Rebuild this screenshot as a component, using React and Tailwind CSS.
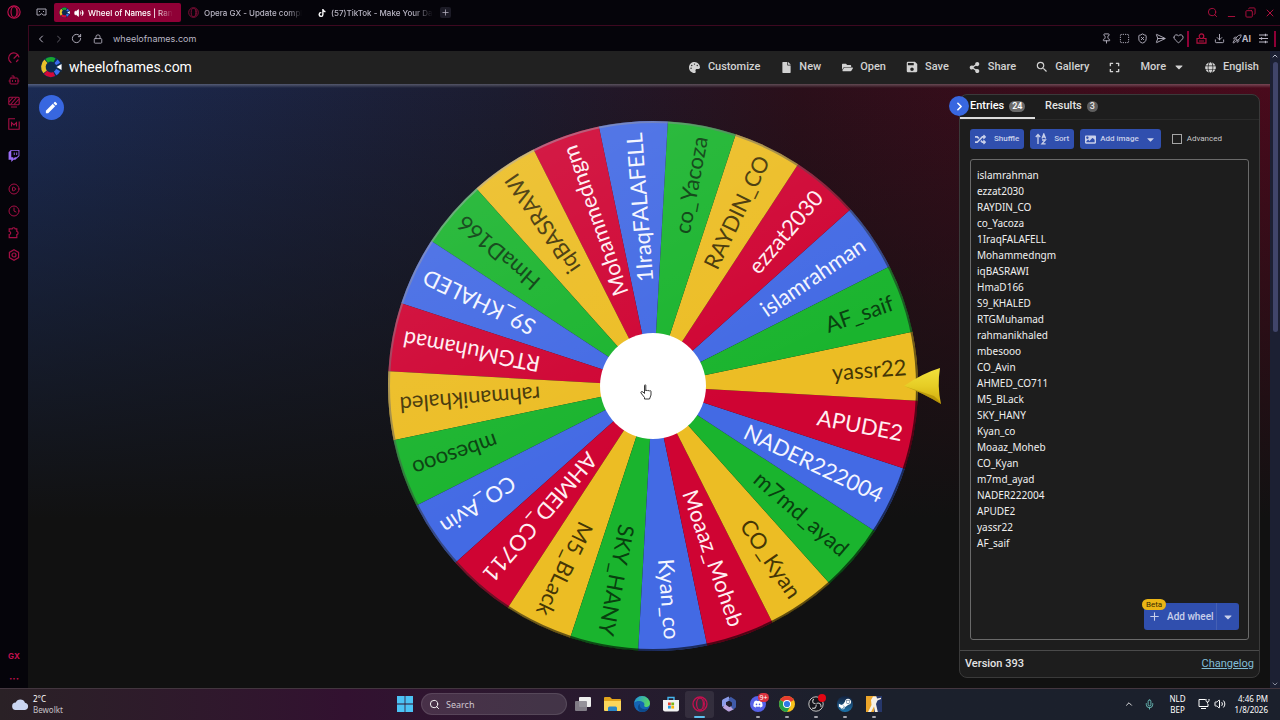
import React, { useState } from 'react';
import {
  Volume2, Plus, ChevronLeft, ChevronRight, ChevronUp, ChevronDown, RotateCw, Lock, Search, Minus, Copy, X,
  Pin, SquareDashed, ShieldX, SendHorizontal, Heart, Download, Rocket,
  Bot, CirclePlay, Clock, Mic,
} from 'lucide-react';
import {
  FaPalette, FaFile, FaFolderOpen, FaShareAlt, FaExpand, FaGlobe, FaRandom, FaImage, FaCaretDown,
  FaTwitch, FaTiktok, FaDiscord, FaSteamSymbol,
} from 'react-icons/fa';
import { MdSave, MdSearch, MdEdit } from 'react-icons/md';

const NAMES = [
  'islamrahman', 'ezzat2030', 'RAYDIN_CO', 'co_Yacoza', '1IraqFALAFELL', 'Mohammedngm',
  'iqBASRAWI', 'HmaD166', 'S9_KHALED', 'RTGMuhamad', 'rahmanikhaled', 'mbesooo',
  'CO_Avin', 'AHMED_CO711', 'M5_BLack', 'SKY_HANY', 'Kyan_co', 'Moaaz_Moheb',
  'CO_Kyan', 'm7md_ayad', 'NADER222004', 'APUDE2', 'yassr22', 'AF_saif',
];

const SLICE_COLORS = ['#436ae4', '#cf0433', '#ecbd24', '#1ab42e'];
const TEXT_COLORS = ['#f3f5ff', '#ffeef2', '#453606', '#08400f'];

const OperaLogo = ({ size, color = '#c4104f' }) => (
  <svg width={size} height={size} viewBox="0 0 16 16" fill="none" stroke={color}>
    <circle cx="8" cy="8" r="7" strokeWidth="1.3" />
    <ellipse cx="8" cy="8" rx="3.4" ry="6" strokeWidth="1.3" />
    <path d="M11 3.2c2.2 2.4 2.2 7.2 0 9.6" strokeWidth="1" />
  </svg>
);

const WheelLogo = ({ size }) => (
  <svg width={size} height={size} viewBox="0 0 24 24" fill="none">
    <circle cx="12" cy="12" r="11.5" fill="#0d2a4f" />
    <g strokeWidth="5">
      <path d="M6.500 5.800A8.300 8.300 0 0 0 5.600 17.300" stroke="#e9c02a" />
      <path d="M6 17.800A8.300 8.300 0 0 0 15.500 19.600" stroke="#d5083a" />
      <path d="M16.500 19A8.300 8.300 0 0 0 17.500 5.700" stroke="#3d6df0" />
      <path d="M15.800 4.600A8.300 8.300 0 0 0 7.200 5.200" stroke="#17a62f" />
    </g>
    <path d="M14 12l9.500-5.500v11z" fill="#0d2a4f" />
    <path d="M18 12l5.500-3.400v6.800z" fill="#fff" />
  </svg>
);

const TabStrip = () => (
  <div className="flex h-[25px] items-center pr-1 text-[8px] font-medium text-[#b9b6c4]">
    <button aria-label="Tab islands" className="ml-2 mr-[7px] flex w-[11px]">
      <svg width="11" height="9" viewBox="0 0 11 9" fill="none" stroke="#a9a6b4">
        <path d="M1 1h9v6H7.4L5.5 5.6 3.6 7H1z" />
        <path d="M3 3.5h1M7 3.5h1" />
      </svg>
    </button>
    <button className="flex h-[19px] w-[127px] items-center gap-1 rounded-[2px] bg-[#8f0036] px-[5px] text-white">
      <WheelLogo size={11} />
      <Volume2 size={10} fill="currentColor" />
      <span className="whitespace-nowrap [mask-image:linear-gradient(to_right,black_80%,transparent)]">Wheel of Names | Ran</span>
    </button>
    <button className="flex h-[19px] w-[128px] items-center gap-[5px] pl-[7px]">
      <OperaLogo size={11} color="#8d0f3c" />
      <span className="whitespace-nowrap [mask-image:linear-gradient(to_right,black_85%,transparent)]">Opera GX - Update compl</span>
    </button>
    <button className="flex h-[19px] w-[125px] items-center gap-[5px] pl-[9px]">
      <FaTiktok size={8} className="text-white" />
      <span className="whitespace-nowrap [mask-image:linear-gradient(to_right,black_80%,transparent)]">(57)TikTok - Make Your Da</span>
    </button>
    <button aria-label="New tab" className="ml-[6px] flex size-[11px] items-center justify-center rounded-[2px] bg-[#1c1b26]">
      <Plus size={9} />
    </button>
    <div className="ml-auto flex items-center gap-2 text-[#b3103f]">
      <button aria-label="Search tabs"><Search size={11} /></button>
      <button aria-label="Minimize" className="pt-2"><Minus size={11} /></button>
      <button aria-label="Restore"><Copy size={11} className="-scale-x-100" /></button>
      <button aria-label="Close"><X size={12} /></button>
    </div>
  </div>
);

const AddressBar = () => (
  <div className="flex h-[26px] items-center border-l border-t border-[#3d0820] pl-[6px] pr-1 text-[9px] text-[#b9b6c4]">
    <button aria-label="Back" className="mr-[6px]"><ChevronLeft size={12} /></button>
    <button aria-label="Forward" className="mr-[6px] opacity-50"><ChevronRight size={12} /></button>
    <button aria-label="Reload" className="mr-[11px]"><RotateCw size={11} /></button>
    <Lock size={10} className="mr-[10px]" />
    <span>wheelofnames.com</span>
    <div className="ml-auto flex items-center gap-[7px]">
      <button aria-label="Pin"><Pin size={11} /></button>
      <button aria-label="Snapshot"><SquareDashed size={11} /></button>
      <button aria-label="Ad blocker"><ShieldX size={11} /></button>
      <button aria-label="Send"><SendHorizontal size={11} /></button>
      <button aria-label="Favourite"><Heart size={11} /></button>
      <span className="-mx-1 h-4 w-[2px] bg-[#8f0036]" />
      <button aria-label="Profile" className="ml-1">
        <svg width="11" height="11" viewBox="0 0 11 11" fill="none" stroke="#b3103f" strokeWidth="1.2">
          <circle cx="5.500" cy="3.200" r="2.300" />
          <path d="M3.600 5.500H1v4.700h9V5.500H7.400M3 8h5" />
        </svg>
      </button>
      <button aria-label="Downloads"><Download size={11} /></button>
      <button className="flex items-center font-bold"><Rocket size={10} />AI</button>
      <button aria-label="Easy setup">
        <svg width="11" height="11" viewBox="0 0 11 11" stroke="currentColor" strokeWidth="1.200">
          <path d="M1 2h9M1 5.500h9M1 9h9M7.500.8v2.400M3.500 4.300v2.400M7.500 7.800v2.400" />
        </svg>
      </button>
      <span className="-ml-[2px] h-4 w-[2px] bg-[#8f0036]" />
    </div>
  </div>
);

const GaugeIcon = () => (
  <svg width="12" height="12" viewBox="0 0 12 12" fill="none" stroke="currentColor" strokeWidth="1.200" strokeLinecap="round">
    <path d="M3 10.500A5.200 5.200 0 1 1 10.900 5M6 6.200L9.500 2.800M8.500 9.500l1.500-1.500" />
  </svg>
);

const StripesIcon = () => (
  <svg width="12" height="12" viewBox="0 0 12 12" fill="none" stroke="currentColor" strokeWidth="1.100">
    <rect x=".8" y="1.200" width="10.400" height="7.600" rx="1" />
    <path d="M1 6l4-4.500M2.500 8.500L8.500 1.500M6 8.500L11 3M3 11h6" />
  </svg>
);

const ModsIcon = () => (
  <svg width="12" height="12" viewBox="0 0 12 12" fill="none" stroke="currentColor" strokeWidth="1.100">
    <path d="M7 .8H.8v10.400h10.400V3.500M3.500 8.500v-4L6 7l2.500-2.500v4" />
  </svg>
);

const PuzzleIcon = () => (
  <svg width="12" height="12" viewBox="0 0 12 12" fill="none" stroke="currentColor" strokeWidth="1.200">
    <path d="M1.200 1.800h3a1.600 1.600 0 0 1 3 0h1.600v2.600a1.700 1.700 0 0 1 0 3.300v2.900H1.200V7.500a1.500 1.500 0 0 0 0-3z" />
  </svg>
);

const HexIcon = () => (
  <svg width="12" height="12" viewBox="0 0 12 12" fill="none" stroke="currentColor" strokeWidth="1.200">
    <path d="M6 .8l4.600 2.600v5.200L6 11.200 1.400 8.600V3.400z" />
    <circle cx="6" cy="6" r="2" />
  </svg>
);

const BotIcon = () => <Bot size={12} className="block" />;
const PlayIcon = () => <CirclePlay size={12} className="block" />;
const ClockIcon = () => <Clock size={12} className="block" />;

const SIDE_ICONS = [
  ['Speed dial', GaugeIcon], ['Cleaner', BotIcon], ['Wallpapers', StripesIcon], ['Mods', ModsIcon],
];
const SIDE_TOOLS = [
  ['Player', PlayIcon], ['History', ClockIcon], ['Extensions', PuzzleIcon], ['Settings', HexIcon],
];

const Sidebar = () => (
  <aside className="flex w-7 shrink-0 flex-col items-center bg-[#05040a] text-[#a50f45]">
    <button aria-label="Opera menu" className="mt-[5px]"><OperaLogo size={14} /></button>
    <div className="mt-[33px] flex flex-col gap-[10px]">
      {SIDE_ICONS.map(([label, Icon]) => (
        <button key={label} aria-label={label}><Icon /></button>
      ))}
    </div>
    <button aria-label="Twitch" className="mt-[20px] text-[#9a6bf5]"><FaTwitch size={12} className="block" /></button>
    <div className="mt-[21px] flex flex-col gap-[10px]">
      {SIDE_TOOLS.map(([label, Icon]) => (
        <button key={label} aria-label={label}><Icon /></button>
      ))}
    </div>
    <button className="mt-auto text-[8px] font-bold leading-[10px] text-[#c4104f]">GX</button>
    <button className="mb-[5px] mt-3 text-[10px] font-bold leading-[10px] text-[#c4104f]">···</button>
  </aside>
);

const NAV = [
  ['Customize', FaPalette], ['New', FaFile], ['Open', FaFolderOpen], ['Save', MdSave],
  ['Share', FaShareAlt], ['Gallery', MdSearch],
];

const Header = () => (
  <header className="flex h-[33px] items-center bg-[#212121] pb-px pl-3 pr-[11px]">
    <a href="#home" className="flex items-center gap-[7px] text-[14px] text-white">
      <WheelLogo size={22} />
      wheelofnames.com
    </a>
    <nav className="ml-auto flex items-center gap-5 text-[11px] font-medium text-[#d2d2d2]">
      {NAV.map(([label, Icon]) => (
        <button key={label} className="flex items-center gap-[7px]">
          <span className="flex w-3 justify-center"><Icon size={label === 'Save' || label === 'Gallery' ? 14 : 11} className="shrink-0" /></span>
          {label}
        </button>
      ))}
      <button aria-label="Fullscreen"><FaExpand size={11} /></button>
      <button className="flex items-center gap-[7px]">More <FaCaretDown size={12} /></button>
      <button className="flex items-center gap-[7px]"><FaGlobe size={11} /> English</button>
    </nav>
  </header>
);

// centre, rim radius and hub radius, in svg units
const CX = 266;
const CY = 267;
const R = 265;
const HUB = 53;
const STEP = 360 / NAMES.length;
const START = -34.3;

const rimPoint = (deg) => {
  const a = (deg * Math.PI) / 180;
  return `${CX + R * Math.cos(a)} ${CY + R * Math.sin(a)}`;
};

const Wheel = () => (
  <svg viewBox="0 0 556 534" className="w-[556px] shrink-0 cursor-pointer" role="img" aria-label="Wheel of names">
    <defs>
      <linearGradient id="sheen" x1="0.2" y1="0" x2="0.5" y2="0.6">
        <stop offset="0" stopColor="#fff" stopOpacity="0.1" />
        <stop offset="1" stopColor="#fff" stopOpacity="0" />
      </linearGradient>
      <linearGradient id="rim" x1="0.2" y1="0.1" x2="0.7" y2="0.8">
        <stop offset="0" stopColor="#a9a9b8" stopOpacity="0.5" />
        <stop offset="0.5" stopColor="#333" stopOpacity="0.5" />
        <stop offset="1" stopColor="#000" stopOpacity="0.6" />
      </linearGradient>
      <linearGradient id="gold" x1="0" y1="0" x2="0" y2="1">
        <stop offset="0" stopColor="#f2e13c" />
        <stop offset="0.5" stopColor="#e6cd25" />
        <stop offset="1" stopColor="#cfa90a" />
      </linearGradient>
    </defs>
    {NAMES.map((name, i) => {
      const mid = START - i * STEP;
      return (
        <g key={name}>
          <path
            d={`M${CX} ${CY}L${rimPoint(mid - STEP / 2)}A${R} ${R} 0 0 1 ${rimPoint(mid + STEP / 2)}Z`}
            fill={SLICE_COLORS[i % 4]}
          />
          <text
            x={CX + 254}
            y={CY}
            dy="8"
            textAnchor="end"
            transform={`rotate(${mid} ${CX} ${CY})`}
            fill={TEXT_COLORS[i % 4]}
            className="font-['Lato',sans-serif] text-[22px]"
          >
            {name}
          </text>
        </g>
      );
    })}
    <circle cx={CX} cy={CY} r={R} fill="url(#sheen)" />
    <circle cx={CX} cy={CY} r={R - 1} fill="none" stroke="url(#rim)" strokeWidth="2" />
    <circle cx={CX} cy={CY} r={HUB} fill="#fff" />
    <path d="M517 267Q536 254 553 249Q550 267 554 285Q536 274 517 267Z" fill="url(#gold)" />
    <path d="M517 267L547 277Q552 281 554 285Q536 274 517 267Z" fill="#9c7800" opacity="0.5" />
    <path
      d="M257.500 266.500v8l-1.500-1.500c-1.500-1-2.500 0-2 1l3.500 4.500v1.500h5l1.500-4v-3.500c0-1-1.500-1.200-1.800-.3c-.2-1-1.700-1-1.900-.2c-.2-.8-1.400-.8-1.500 0v-5.500c0-1-1.300-1-1.300 0z"
      fill="#fff"
      stroke="#222"
      strokeWidth="0.9"
    />
  </svg>
);

const EntriesPanel = () => {
  const [entries, setEntries] = useState(NAMES.join('\n'));

  return (
    <section className="relative flex w-[301px] shrink-0 flex-col rounded-lg border border-[#3a3a3a] bg-[#1d1d1d] text-[#e4e4e4]">
      <button aria-label="Hide panel" className="absolute -left-[11px] top-[1px] flex size-5 items-center justify-center rounded-full bg-[#3867e0] text-white">
        <ChevronRight size={13} strokeWidth={3} />
      </button>
      <div className="flex h-[25px] items-stretch border-b border-[#2a2a2a] text-[11px] font-medium">
        <button className="flex w-[75px] items-center gap-[5px] border-b-2 border-[#dcdcdc] pl-[10px] text-white">
          Entries
          <span className="rounded-full bg-[#6b6b6b] px-[3px] text-[9px] leading-[11px]">24</span>
        </button>
        <button className="flex items-center gap-[5px] border-b-2 border-transparent pl-[10px]">
          Results
          <span className="rounded-full bg-[#5e5e5e] px-[3px] text-[9px] leading-[11px]">3</span>
        </button>
      </div>
      <div className="mt-[9px] flex h-5 items-stretch gap-[6px] pl-[10px] text-[8px] font-medium text-[#c9d0ea]">
        <button className="flex items-center gap-2 rounded-[3px] bg-[#304fae] px-[5px]"><FaRandom size={11} />Shuffle</button>
        <button className="flex items-center gap-[7px] rounded-[3px] bg-[#304fae] px-[5px]">
          <svg width="12" height="12" viewBox="0 0 12 12" fill="none" stroke="currentColor" strokeWidth="1.300">
            <path d="M3 11V2M.8 4L3 1.500 5.200 4M7 5.500L8.800 1l1.800 4.500M7.500 4h2.600M7 7h3.400L7 10.800h3.600" />
          </svg>
          Sort
        </button>
        <button className="flex items-center gap-1 rounded-[3px] bg-[#304fae] px-[5px]">
          <FaImage size={11} />Add image<FaCaretDown size={11} className="ml-[2px]" />
        </button>
        <label className="ml-[5px] flex items-center gap-[5px] font-normal text-[#c8c8c8]">
          <input type="checkbox" className="size-[10px] appearance-none border border-[#a5a5a5]" />
          Advanced
        </label>
      </div>
      <div className="relative mx-[10px] mb-[10px] mt-[10px] flex flex-1">
        <textarea
          aria-label="Entries"
          value={entries}
          onChange={(e) => setEntries(e.target.value)}
          spellCheck={false}
          className="w-full resize-none rounded-[3px] border border-[#6a6a6a] bg-transparent px-[6px] py-[7px] font-['Noto_Sans',sans-serif] text-[10px] leading-4 text-[#f0f0f0] outline-none"
        />
        <div className="absolute bottom-[10px] right-[10px] flex h-[27px] rounded-[3px] bg-[#304fae] text-[10px] font-medium text-[#c9d0ea]">
          <button className="flex w-[73px] items-center gap-[6px] whitespace-nowrap border-r border-[#4560b4] pl-1"><Plus size={13} />Add wheel</button>
          <button aria-label="More wheel options" className="flex w-[22px] items-center justify-center"><FaCaretDown size={12} /></button>
          <span className="absolute -left-[2px] -top-1 rounded-full bg-[#eab516] px-1 text-[8px] font-normal leading-[11px] text-[#3a2c00]">Beta</span>
        </div>
      </div>
      <footer className="flex h-[27px] items-center justify-between border-t border-[#4a4a4a] px-[5px] text-[11px] font-medium">
        <span>Version 393</span>
        <a href="#changelog" className="font-normal text-[#82bdd6] underline">Changelog</a>
      </footer>
    </section>
  );
};

const Scrollbar = () => (
  <div className="flex w-[10px] shrink-0 flex-col items-center bg-[#1c2033] text-[#b8bccb]">
    <ChevronUp size={8} className="mb-[2px] mt-[1px]" strokeWidth={3} />
    <div className="h-[270px] w-[5px] rounded-full bg-[#40456a]" />
    <ChevronDown size={8} className="mt-auto" />
  </div>
);

const StartIcon = () => (
  <svg width="16" height="16" viewBox="0 0 16 16" fill="#4cc2f5">
    <path d="M0 0h7.600v7.600H0zM8.400 0H16v7.600H8.400zM0 8.400h7.600V16H0zM8.400 8.400H16V16H8.400z" />
  </svg>
);

const TaskViewIcon = () => (
  <svg width="17" height="16" viewBox="0 0 17 16">
    <rect x="4" y="1" width="12" height="10" rx="1" fill="#eee" />
    <rect x="0" y="5" width="12" height="10" rx="1" fill="#8b8790" opacity="0.9" />
  </svg>
);

const ExplorerIcon = () => (
  <svg width="17" height="16" viewBox="0 0 17 16">
    <path d="M0 2q0-1 1-1h5l2 2h8q1 0 1 1v10H0z" fill="#e2a41c" />
    <path d="M0 5h17v9q0 1-1 1H1q-1 0-1-1z" fill="#fbd65b" />
    <path d="M4 15v-3q0-1.500 1.500-1.500h6Q13 10.500 13 12v3z" fill="#2a86c7" />
  </svg>
);

const EdgeIcon = () => (
  <svg width="16" height="16" viewBox="0 0 16 16">
    <defs>
      <linearGradient id="edge" x1="0" y1="0" x2="1" y2="0.3">
        <stop offset="0" stopColor="#1f8fe0" />
        <stop offset="1" stopColor="#56d668" />
      </linearGradient>
    </defs>
    <circle cx="8" cy="8" r="8" fill="#1565b4" />
    <path d="M.1 7A8 8 0 0 1 16 7.500c0 3-3 4-5 3.200c-1.500-.6-.6-1.200-.6-2.500C10.400 5 3 3.500.1 7z" fill="url(#edge)" />
    <path d="M6 8c-1 4 3 6.500 8.500 4.500c-1.500 2.400-4 3.500-6.500 3.500C3 15 3 9 6 8z" fill="#0d4a8c" />
  </svg>
);

const StoreIcon = () => (
  <svg width="16" height="16" viewBox="0 0 16 16">
    <path d="M5 4V1.500h6V4" fill="none" stroke="#45b6ee" strokeWidth="1.400" />
    <path d="M0 4h16v9.500q0 2-2 2H2q-2 0-2-2z" fill="#f2f2f2" />
    <path d="M5 6.500h2.800v2.800H5z" fill="#e8432e" />
    <path d="M8.300 6.500h2.800v2.800H8.300z" fill="#7cb518" />
    <path d="M5 9.800h2.800v2.800H5z" fill="#1b9de2" />
    <path d="M8.300 9.800h2.800v2.800H8.300z" fill="#f8b40c" />
  </svg>
);

const CopilotIcon = () => (
  <svg width="16" height="16" viewBox="0 0 16 16" fill="none" strokeWidth="4" strokeLinejoin="round">
    <path d="M8.500 2.200L3 5v5.500" stroke="#8b9be8" />
    <path d="M3 10l5 3.500 4-2" stroke="#b9a2dc" />
    <path d="M8.500 2.300L13 5.500v5L11 12" stroke="#3f5aa8" />
  </svg>
);

const ChromeIcon = () => (
  <svg width="16" height="16" viewBox="0 0 16 16">
    <circle cx="8" cy="8" r="8" fill="#f9c21b" />
    <path d="M8 8L1.100 4A8 8 0 0 1 14.900 4z" fill="#e53c2f" />
    <path d="M8 8L1.100 4A8 8 0 0 0 8 16l3.500-6z" fill="#22a04a" />
    <circle cx="8" cy="8" r="4" fill="#fff" />
    <circle cx="8" cy="8" r="3.100" fill="#2f79e8" />
  </svg>
);

const ObsIcon = () => (
  <svg width="16" height="16" viewBox="0 0 16 16" fill="none" stroke="#c4c4c4">
    <circle cx="8" cy="8" r="7.200" fill="#15151b" />
    <path d="M7.500 7.500C4.500 8 3.800 5 5.800 3M8.500 7.500c2.500-1.500 5 .5 4.500 3.500M8 8.500c1 3-1.500 4.500-4 3.500" strokeWidth="1.100" />
  </svg>
);

const CsIcon = () => (
  <svg width="16" height="16" viewBox="0 0 16 16">
    <path d="M0 0h16v16H0z" fill="#eba52a" />
    <path d="M10 0h6v16H8z" fill="#26376b" />
    <path d="M7 .5h3.500l.5 2 4-.8v1.300l-3.500 1.500L10 8l1.800 8H9L8 10.500 5 16H2l3.500-7L5 4z" fill="#f5f0e6" />
  </svg>
);

const DiscordIcon = () => (
  <span className="relative flex size-4 items-center justify-center rounded-full bg-[#5661e8] text-white">
    <FaDiscord size={10} />
    <span className="absolute -right-[3px] -top-[3px] rounded-full bg-[#d9323f] px-[1px] text-[7px] leading-[9px]">9+</span>
  </span>
);

const SteamIcon = () => (
  <span className="flex size-4 items-center justify-center rounded-full bg-linear-to-b from-[#12213d] to-[#1a75ad] text-white">
    <FaSteamSymbol size={14} />
  </span>
);

const ObsRecording = () => (
  <span className="relative block">
    <ObsIcon />
    <span className="absolute -right-[2px] -top-[2px] size-2 rounded-full bg-[#e30613]" />
  </span>
);

const NetworkIcon = () => (
  <svg width="12" height="12" viewBox="0 0 12 12" fill="none" stroke="currentColor">
    <path d="M7.500 1.500H1v7h9V6M3 10.500h5M9.500 5.500V4M8 1v1.500q0 1.500 1.500 1.500T11 2.500V1" />
  </svg>
);

const APPS = [
  { label: 'Task view', icon: <TaskViewIcon /> },
  { label: 'File Explorer', icon: <ExplorerIcon /> },
  { label: 'Edge', icon: <EdgeIcon /> },
  { label: 'Store', icon: <StoreIcon /> },
  { label: 'Opera GX', icon: <OperaLogo size={16} />, active: true },
  { label: 'Microsoft 365', icon: <CopilotIcon /> },
  { label: 'Discord', icon: <DiscordIcon />, running: true },
  { label: 'Chrome', icon: <ChromeIcon />, running: true },
  { label: 'OBS Studio', icon: <ObsRecording />, running: true },
  { label: 'Steam', icon: <SteamIcon />, running: true },
  { label: 'Counter-Strike 2', icon: <CsIcon />, running: true },
];

const Taskbar = () => (
  <footer className="grid h-8 shrink-0 grid-cols-[1fr_auto_1fr] items-center border-t border-[#43363f] bg-linear-to-r from-[#2a2126] via-[#321130] via-27% to-[#1b202c] to-65% pb-px font-['Noto_Sans',sans-serif] text-[8px] leading-[11px] text-white">
    <button className="flex items-center gap-1 pl-3 text-left">
      <svg width="17" height="12" viewBox="0 0 17 12" fill="#cbd6f2">
        <path d="M4 12a3.700 3.700 0 0 1-.3-7.400A5 5 0 0 1 13 4.700 3.700 3.700 0 0 1 13 12z" />
      </svg>
      <span>2°C<br /><span className="text-[#c6c0c6]">Bewolkt</span></span>
    </button>
    <div className="flex items-center gap-[2px] pr-[2px]">
      <button aria-label="Start" className="flex w-[29px] justify-center"><StartIcon /></button>
      <label className="flex h-[22px] w-[146px] items-center gap-[6px] rounded-full border border-white/10 bg-white/12 px-[7px]">
        <Search size={11} className="shrink-0" />
        <input type="search" aria-label="Search" placeholder="Search" className="w-full bg-transparent text-[9px] outline-none placeholder:text-[#cfc6cf]" />
      </label>
      <div className="flex">
        {APPS.map(({ label, icon, running, active }) => (
          <button
            key={label}
            aria-label={label}
            className={`relative flex h-[27px] w-[29px] items-center justify-center rounded-[3px] ${active ? 'bg-white/8' : ''}`}
          >
            {icon}
            {active && <span className="absolute bottom-0 h-[2px] w-[11px] rounded-full bg-[#5cc0ee]" />}
            {running && <span className="absolute bottom-0 h-[2px] w-1 rounded-full bg-[#a5a5ad]" />}
          </button>
        ))}
      </div>
    </div>
    <div className="flex items-center justify-end pr-3 text-right">
      <button aria-label="Hidden icons" className="mr-[10px]"><ChevronUp size={10} /></button>
      <button aria-label="Microphone" className="mr-[14px] text-[#6dc3bd]"><Mic size={11} /></button>
      <button className="mr-3 text-center">NLD<br />BEP</button>
      <button aria-label="Network and volume" className="mr-[9px] flex gap-1"><NetworkIcon /><Volume2 size={12} /></button>
      <button className="text-right">4:46 PM<br />1/8/2026</button>
    </div>
  </footer>
);

export default function App() {
  return (
    <div className="flex h-screen flex-col overflow-hidden bg-[#05040a] font-['Inter',sans-serif]">
      <div className="flex min-h-0 flex-1">
        <Sidebar />
        <div className="flex min-w-0 flex-1 flex-col">
          <TabStrip />
          <AddressBar />
          <div className="flex min-h-0 flex-1">
            <div className="flex min-w-0 flex-1 flex-col font-['Roboto',sans-serif]">
              <Header />
              <main className="flex min-h-0 flex-1 bg-[linear-gradient(to_bottom,rgba(255,255,255,0.25),transparent_4px),linear-gradient(to_bottom,transparent,#111_72%),linear-gradient(to_right,#1b2b54,#1c1c30_38%,#2b0f1a_62%,#4a0a1c)] pb-[10px] pr-[10px] pt-[10px]">
                <div className="flex-1">
                  <button aria-label="Edit title" className="ml-[11px] mt-[1px] flex size-[25px] items-center justify-center rounded-full bg-[#3867e0] text-white">
                    <MdEdit size={15} />
                  </button>
                </div>
                <div className="mr-4 flex items-center">
                  <Wheel />
                </div>
                <EntriesPanel />
              </main>
            </div>
            <Scrollbar />
          </div>
        </div>
      </div>
      <Taskbar />
    </div>
  );
}
